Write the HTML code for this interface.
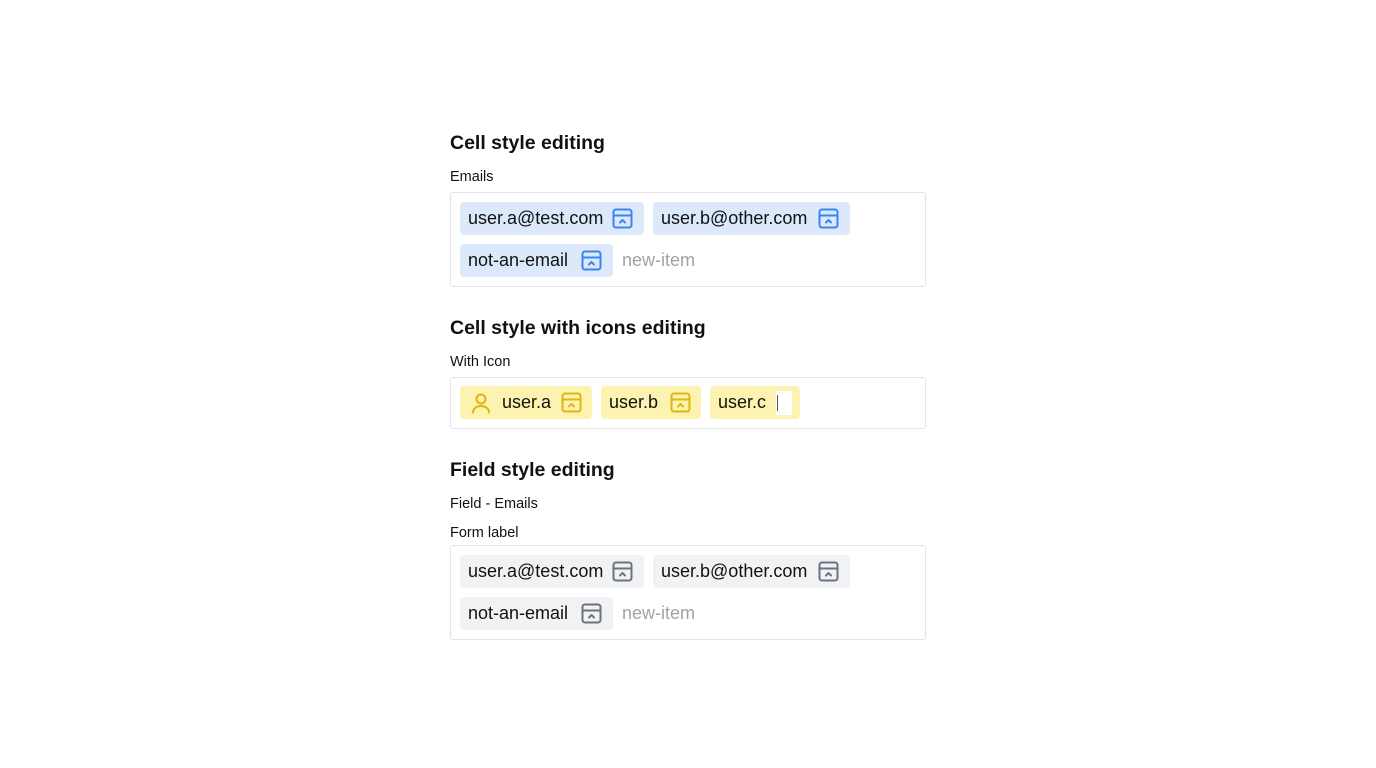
<!DOCTYPE html>
<html><head><style>
body{margin:0;width:1376px;height:768px;background:#fff;font-family:"Liberation Sans",sans-serif;color:#111;position:relative;overflow:hidden}
.a{position:absolute}
h2{position:absolute;margin:0;font-size:19.5px;font-weight:bold;left:450px;white-space:nowrap}
.lbl{position:absolute;left:450px;font-size:14.5px;white-space:nowrap}
.box{position:absolute;left:450px;width:474px;border:1px solid #e4e4e7;border-radius:3px}
.chip{position:absolute;height:33px;border-radius:4px;font-size:18px;line-height:33px;white-space:nowrap}
.chip span{position:absolute;left:8px}
.chip svg{position:absolute;top:6px}
.blue{background:#dbe9fb}
.yel{background:#fdf3b0}
.gray{background:#f1f2f4}
.ph{position:absolute;font-size:18px;color:#a1a1aa;line-height:33px}
</style></head><body>
<svg width="0" height="0" style="position:absolute"><defs>
<g id="ic"><rect x="1.5" y="1.5" width="18" height="18" rx="2.5" fill="none" stroke="currentColor" stroke-width="2"/><line x1="1.5" y1="7.5" x2="19.5" y2="7.5" stroke="currentColor" stroke-width="2"/><path d="M8 14.5l2.5-2.5 2.5 2.5" fill="none" stroke="currentColor" stroke-width="2" stroke-linecap="round" stroke-linejoin="round"/></g>
</defs></svg>

<h2 style="top:132px">Cell style editing</h2>
<div class="lbl" style="top:169px">Emails</div>
<div class="box" style="top:192px;height:93px"></div>
<div class="chip blue" style="left:460px;top:202px;width:184px"><span>user.a@test.com</span><svg style="left:152px;color:#3b82f6" width="21" height="21"><use href="#ic"/></svg></div>
<div class="chip blue" style="left:653px;top:202px;width:197px"><span>user.b@other.com</span><svg style="left:165px;color:#3b82f6" width="21" height="21"><use href="#ic"/></svg></div>
<div class="chip blue" style="left:460px;top:244px;width:153px"><span>not-an-email</span><svg style="left:121px;color:#3b82f6" width="21" height="21"><use href="#ic"/></svg></div>
<div class="ph" style="left:622px;top:244px">new-item</div>

<h2 style="top:317px">Cell style with icons editing</h2>
<div class="lbl" style="top:354px">With Icon</div>
<div class="box" style="top:377px;height:50px"></div>
<div class="chip yel" style="left:460px;top:386px;width:132px"><svg style="left:10px;top:6px;color:#e0b50f" width="22" height="22"><circle cx="11" cy="7" r="4.5" fill="none" stroke="currentColor" stroke-width="2"/><path d="M3 20.5c0-4 3.5-6.5 8-6.5s8 2.5 8 6.5" fill="none" stroke="currentColor" stroke-width="2" stroke-linecap="round"/></svg><span style="left:42px">user.a</span><svg style="left:101px;color:#e0b50f" width="21" height="21"><use href="#ic"/></svg></div>
<div class="chip yel" style="left:601px;top:386px;width:100px"><span>user.b</span><svg style="left:69px;color:#e0b50f" width="21" height="21"><use href="#ic"/></svg></div>
<div class="chip yel" style="left:710px;top:386px;width:90px"><span>user.c</span><div class="a" style="left:66px;top:5px;width:16px;height:24px;background:#fff"><div class="a" style="left:1px;top:4px;width:1px;height:16px;background:#555"></div></div></div>

<h2 style="top:459px">Field style editing</h2>
<div class="lbl" style="top:496px">Field - Emails</div>
<div class="lbl" style="top:525px">Form label</div>
<div class="box" style="top:545px;height:93px"></div>
<div class="chip gray" style="left:460px;top:555px;width:184px"><span>user.a@test.com</span><svg style="left:152px;color:#6b7280" width="21" height="21"><use href="#ic"/></svg></div>
<div class="chip gray" style="left:653px;top:555px;width:197px"><span>user.b@other.com</span><svg style="left:165px;color:#6b7280" width="21" height="21"><use href="#ic"/></svg></div>
<div class="chip gray" style="left:460px;top:597px;width:153px"><span>not-an-email</span><svg style="left:121px;color:#6b7280" width="21" height="21"><use href="#ic"/></svg></div>
<div class="ph" style="left:622px;top:597px">new-item</div>
</body></html>
